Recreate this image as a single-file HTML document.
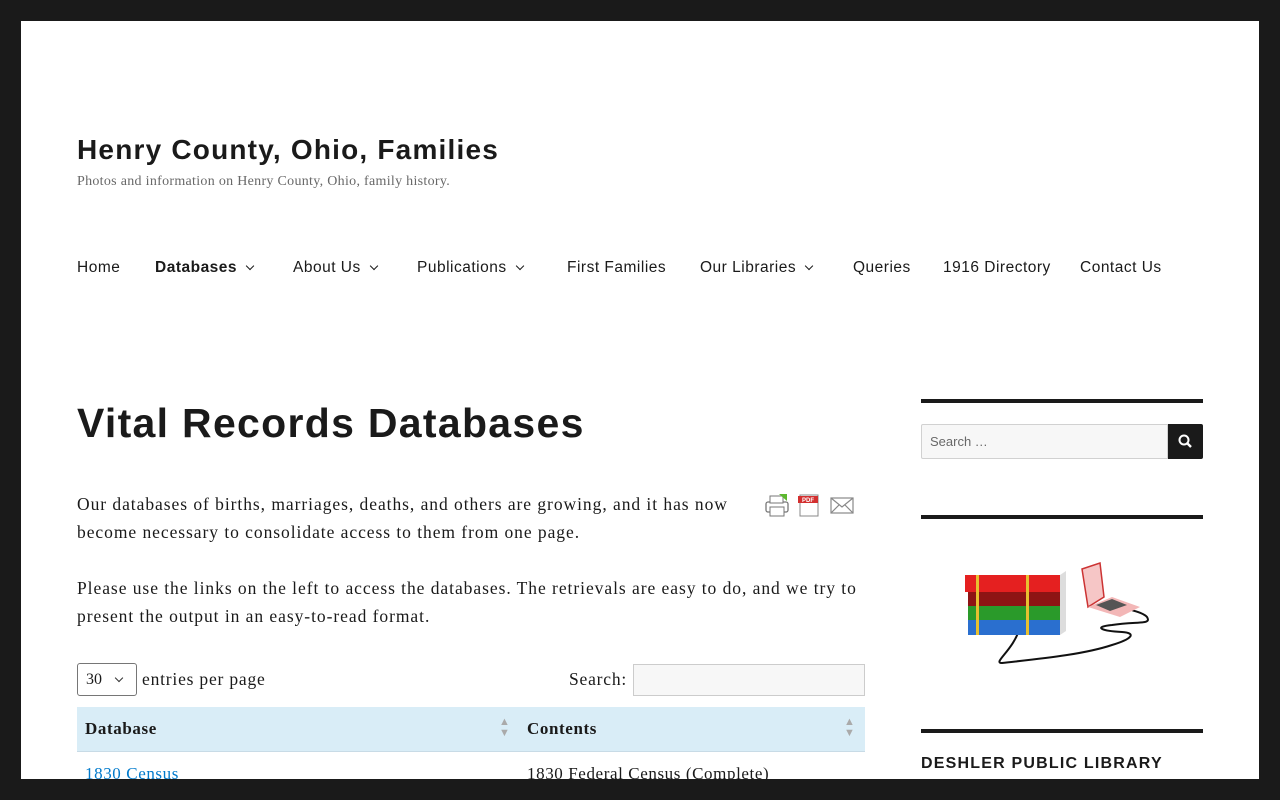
<!DOCTYPE html>
<html><head><meta charset="utf-8"><style>
html,body{margin:0;padding:0}
body{width:1280px;height:800px;background:#1a1a1a;position:relative;overflow:hidden;font-family:"Liberation Serif",serif;color:#1a1a1a}
.page{position:absolute;left:21px;top:21px;width:1238px;height:758px;background:#fff;overflow:hidden}
.a{position:absolute}
.sans{font-family:"Liberation Sans",sans-serif}
.nav span{position:absolute;top:238px;font-size:15.5px;letter-spacing:0.5px;font-family:"Liberation Sans",sans-serif;white-space:nowrap}
.chev{display:inline-block;width:5px;height:5px;border-right:1.6px solid #1a1a1a;border-bottom:1.6px solid #1a1a1a;transform:rotate(45deg);margin-left:10px;position:relative;top:-3px}
p{margin:0;font-size:17.5px;line-height:28px;white-space:nowrap;letter-spacing:0.95px}
.bar{position:absolute;left:900px;width:282px;height:4px;background:#1a1a1a}
</style></head><body>
<div class="page">
<div class="a sans" style="left:56px;top:113px;font-size:28px;font-weight:bold;letter-spacing:1.2px">Henry County, Ohio, Families</div>
<div class="a" style="left:56px;top:153px;font-size:14px;color:#686868;letter-spacing:0.3px">Photos and information on Henry County, Ohio, family history.</div>
<div class="nav">
<span style="left:56px">Home</span>
<span style="left:134px;font-weight:bold">Databases<i class="chev"></i></span>
<span style="left:272px">About Us<i class="chev"></i></span>
<span style="left:396px">Publications<i class="chev"></i></span>
<span style="left:546px">First Families</span>
<span style="left:679px">Our Libraries<i class="chev"></i></span>
<span style="left:832px">Queries</span>
<span style="left:922px">1916 Directory</span>
<span style="left:1059px">Contact Us</span>
</div>
<div class="a sans" style="left:56px;top:379px;font-size:41px;font-weight:bold;letter-spacing:1.3px">Vital Records Databases</div>
<div class="a" style="left:56px;top:469px"><p>Our databases of births, marriages, deaths, and others are growing, and it has now<br>become necessary to consolidate access to them from one page.</p></div>
<svg class="a" style="left:742px;top:471px" width="92" height="26" viewBox="0 0 92 26">
<rect x="3" y="10" width="22" height="10" rx="2" fill="#fff" stroke="#777" stroke-width="1.3"/>
<rect x="7" y="4" width="13" height="7" fill="#fff" stroke="#777"/>
<path d="M16 2 L24 2 L24 9 Z" fill="#5cb82e"/>
<rect x="7" y="15" width="14" height="9" fill="#fff" stroke="#777"/>
<rect x="37" y="3" width="18" height="21" fill="#fff" stroke="#888"/>
<rect x="35" y="4" width="20" height="7" fill="#d32f2f"/>
<text x="45" y="10" font-size="6" fill="#fff" font-family="Liberation Sans" font-weight="bold" text-anchor="middle">PDF</text>
<rect x="68" y="6" width="22" height="15" fill="#fff" stroke="#888" stroke-width="1.2"/>
<path d="M68 6 L79 15 L90 6 M68 21 L76 13 M90 21 L82 13" fill="none" stroke="#888" stroke-width="1.2"/>
</svg>
<div class="a" style="left:56px;top:553px"><p>Please use the links on the left to access the databases. The retrievals are easy to do, and we try to<br>present the output in an easy-to-read format.</p></div>
<div class="a" style="left:56px;top:642px;border:1px solid #767676;border-radius:3px;font-size:16px;line-height:31px;box-sizing:border-box;width:60px;height:33px;padding-left:8px">30 <i style="display:inline-block;width:5px;height:5px;border-right:1.5px solid #333;border-bottom:1.5px solid #333;transform:rotate(45deg);margin-left:10px;position:relative;top:-3px"></i></div>
<div class="a" style="left:121px;top:648px;font-size:17.5px;letter-spacing:0.8px">entries per page</div>
<div class="a" style="left:548px;top:648px;font-size:17.5px;letter-spacing:0.8px">Search:</div>
<div class="a" style="left:612px;top:643px;width:232px;height:32px;box-sizing:border-box;border:1px solid #ccc;background:#f7f7f7"></div>
<div class="a" style="left:56px;top:686px;width:788px;height:44px;background:#d9edf7;border-bottom:1px solid #c8dbe6"></div>
<div class="a" style="left:64px;top:698px;font-size:17px;font-weight:bold;letter-spacing:0.6px">Database</div>
<div class="a" style="left:506px;top:698px;font-size:17px;font-weight:bold;letter-spacing:0.6px">Contents</div>
<div class="a" style="left:478px;top:696px;color:#aaa;font-size:11px;line-height:11px">▲<br>▼</div>
<div class="a" style="left:823px;top:696px;color:#aaa;font-size:11px;line-height:11px">▲<br>▼</div>
<div class="a" style="left:64px;top:743px;font-size:17px;color:#007acc;text-decoration:underline;letter-spacing:0.6px">1830 Census</div>
<div class="a" style="left:506px;top:743px;font-size:17px;letter-spacing:0.6px">1830 Federal Census (Complete)</div>
<div class="bar" style="top:378px"></div>
<div class="a" style="left:900px;top:403px;width:247px;height:35px;box-sizing:border-box;border:1px solid #d1d1d1;background:#f7f7f7;border-radius:2px 0 0 2px;font-family:'Liberation Sans',sans-serif;font-size:13px;color:#686868;line-height:33px;padding-left:8px">Search …</div>
<div class="a" style="left:1147px;top:403px;width:35px;height:35px;background:#1a1a1a;border-radius:0 2px 2px 0">
<svg width="35" height="35"><circle cx="16" cy="16" r="4.5" fill="none" stroke="#fff" stroke-width="2"/><path d="M19 19 L23 23" stroke="#fff" stroke-width="2.4"/></svg></div>
<div class="bar" style="top:494px"></div>
<svg class="a" style="left:941px;top:534px" width="198" height="118" viewBox="0 0 198 118">
<path d="M58 72 C52 95 30 108 40 108 C75 104 120 100 150 90 C170 84 175 78 160 77 C140 76 130 72 150 70 C175 66 190 70 185 62 C180 56 165 56 168 52" fill="none" stroke="#111" stroke-width="2"/>
<rect x="6" y="64" width="92" height="16" fill="#2a6fcf"/><rect x="6" y="50" width="92" height="15" fill="#2a9a2a"/><rect x="6" y="36" width="92" height="15" fill="#8e1414"/><rect x="3" y="20" width="95" height="17" fill="#e52020"/>
<path d="M98 20 L104 16 L104 76 L98 80 Z" fill="#ddd"/>
<rect x="14" y="20" width="3" height="60" fill="#e8c030"/><rect x="64" y="20" width="3" height="60" fill="#e8c030"/>
<path d="M120 14 L138 8 L142 42 L126 52 Z" fill="#f6c6c6" stroke="#c33" stroke-width="1.5"/>
<path d="M126 52 L150 42 L178 52 L158 62 Z" fill="#f3b7b7"/><path d="M134 50 L150 44 L165 50 L148 56 Z" fill="#555"/>
</svg>
<div class="bar" style="top:708px"></div>
<div class="a sans" style="left:900px;top:734px;font-size:16px;font-weight:bold;letter-spacing:1.2px">DESHLER PUBLIC LIBRARY</div>
</div>
</body></html>
